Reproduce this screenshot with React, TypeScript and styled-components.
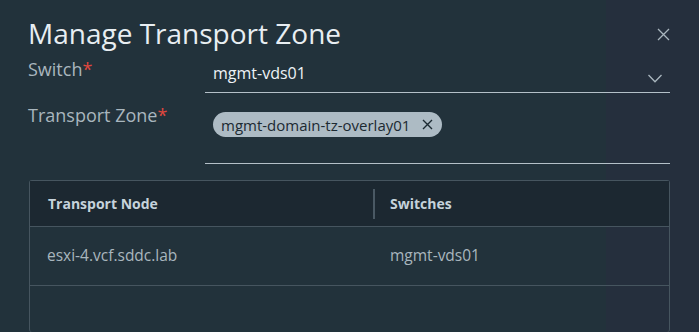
import styled, { createGlobalStyle } from 'styled-components';

const GlobalStyles = createGlobalStyle`
  * {
    box-sizing: border-box;
    margin: 0;
    padding: 0;
  }

  html, body {
    width: 699px;
    height: 332px;
    overflow: hidden;
  }

  body {
    font-family: 'Open Sans', sans-serif;
    background: linear-gradient(to right, #22323b 606px, #252f3d 606px);
    color: #e3e9ee;
  }
`;

const Modal = styled.div`
  display: flex;
  flex-direction: column;
  padding: 16px 29px 0 28px;
  height: 332px;
`;

const Header = styled.div`
  display: flex;
  justify-content: space-between;
  align-items: center;
  height: 34px;
`;

const Title = styled.h1`
  font-size: 28px;
  font-weight: 400;
  color: #e8eef2;
  line-height: 34px;
`;

const CloseButton = styled.button`
  background: none;
  border: none;
  width: 13px;
  height: 13px;
  margin-top: 3px;
  display: flex;
  color: #a9b6be;
`;

const Form = styled.div`
  display: grid;
  grid-template-columns: 177px 1fr;
  margin-top: 5px;
`;

const Label = styled.div`
  font-size: 18px;
  line-height: 22px;
  color: #a9b6be;
  padding-top: 3px;
`;

const Required = styled.span`
  color: #e0473e;
`;

const Field = styled.div<{ $height: number }>`
  height: ${(p) => p.$height}px;
  border-bottom: 1px solid #b4c0c8;
  display: flex;
  align-items: flex-start;
  justify-content: space-between;
  padding: 7px 8px 0 8px;
  margin-bottom: 8px;
`;

const Value = styled.div`
  font-size: 16px;
  line-height: 22px;
  color: #eef3f6;
`;

const Chip = styled.div`
  display: flex;
  align-items: center;
  gap: 12px;
  height: 25px;
  padding: 0 9px 0 8px;
  border-radius: 13px;
  background: #adbbc4;
  color: #1c2a32;
  font-size: 15px;
  margin-top: 4px;
`;

const Table = styled.div`
  margin-top: 8px;
  border: 1px solid #46555f;
  border-radius: 3px;
  border-bottom: none;
  flex: 1;
  margin-left: 1px;
`;

const Row = styled.div<{ $head?: boolean }>`
  display: grid;
  grid-template-columns: 343px 1fr;
  height: ${(p) => (p.$head ? 46 : 59)}px;
  align-items: center;
  background: ${(p) => (p.$head ? '#1c2831' : 'transparent')};
  border-bottom: 1px solid #46555f;
`;

const HeadCell = styled.div<{ $divider?: boolean }>`
  font-size: 14px;
  font-weight: 700;
  color: #c6d3dc;
  padding-left: ${(p) => (p.$divider ? 15 : 18)}px;
  border-left: ${(p) => (p.$divider ? '2px solid #4a5964' : 'none')};
  line-height: 30px;
`;

const Cell = styled.div`
  font-size: 15.5px;
  color: #a9b6be;
  padding-left: 17px;
  margin-top: -2px;
`;

export default function App() {
  return (
    <>
      <GlobalStyles />
      <Modal>
        <Header>
          <Title>Manage Transport Zone</Title>
          <CloseButton aria-label="Close">
            <svg width="13" height="13" viewBox="0 0 13 13" fill="none" stroke="currentColor" strokeWidth="1.3">
              <path d="M1 1 L12 12 M12 1 L1 12" />
            </svg>
          </CloseButton>
        </Header>
        <Form>
          <Label>
            Switch<Required>*</Required>
          </Label>
          <Field $height={38}>
            <Value>mgmt-vds01</Value>
            <svg width="14" height="9" viewBox="0 0 14 9" fill="none" stroke="#a9b6be" strokeWidth="1.3" style={{ marginTop: 12 }}>
              <path d="M0.5 1 L7 7.8 L13.5 1" />
            </svg>
          </Field>
          <Label>
            Transport Zone<Required>*</Required>
          </Label>
          <Field $height={63}>
            <Chip>
              mgmt-domain-tz-overlay01
              <svg width="11" height="11" viewBox="0 0 11 11" fill="none" stroke="#1c2a32" strokeWidth="1.4">
                <path d="M1 1 L10 10 M10 1 L1 10" />
              </svg>
            </Chip>
          </Field>
        </Form>
        <Table>
          <Row $head>
            <HeadCell>Transport Node</HeadCell>
            <HeadCell $divider>Switches</HeadCell>
          </Row>
          <Row>
            <Cell>esxi-4.vcf.sddc.lab</Cell>
            <Cell>mgmt-vds01</Cell>
          </Row>
        </Table>
      </Modal>
    </>
  );
}
